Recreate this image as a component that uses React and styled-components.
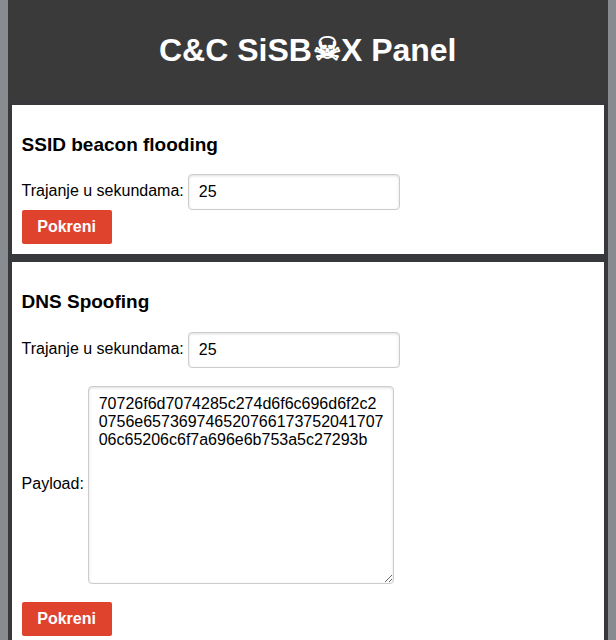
import React from "react";
import styled, { createGlobalStyle } from "styled-components";

const Global = createGlobalStyle`
  body { margin: 0 8px; background: #888b90; font-family: "Liberation Sans", Arial, sans-serif; font-size: 16px; color: #000; overflow: hidden; }
`;
const Page = styled.main`
  background: #37383c;
  height: 640px;
  overflow: hidden;
`;
const Header = styled.header`
  height: 101px;
  box-sizing: border-box;
  padding: 32px 0.5px 0 0;
  text-align: center;
  background: #3a3a3b;
`;
const Title = styled.h1`
  margin: 0;
  font-size: 32px;
  line-height: 37px;
  color: #fff;
`;
const Skull = styled.span`
  line-height: 1;
  vertical-align: 1px;
  margin: 0 -1px 0 1px;
`;
const Content = styled.div`
  display: flex;
  flex-direction: column;
  gap: 8px;
  padding: 4px;
`;
const Panel = styled.section`
  background: #fff;
  padding: 29px 9.6px 10px;
`;
const Heading = styled.h3`
  margin: 0 0 ${(p) => p.$gap}px;
  font-size: 19px;
  line-height: 21px;
`;
const Field = styled.label`
  display: flex;
  align-items: ${(p) => (p.$tall ? "center" : "flex-start")};
  line-height: 18px;
  gap: 4.45px;
  margin-bottom: ${(p) => p.$gap || 0}px;
`;
const Caption = styled.span`
  padding-top: ${(p) => p.$top || 0}px;
  padding-bottom: ${(p) => p.$bottom || 0}px;
`;
const Input = styled.input`
  box-sizing: border-box;
  width: 212px;
  height: 36px;
  padding: 8px 9.6px;
  border: 1px solid #ccc;
  border-radius: 4px;
  box-shadow: inset 0 1px 3px #ddd;
  font: 16px "Liberation Sans", Arial, sans-serif;
  outline: none;
`;
const Payload = styled.textarea`
  box-sizing: border-box;
  width: 306px;
  height: 198px;
  padding: 8px 9.4px;
  border: 1px solid #ccc;
  border-radius: 4px;
  box-shadow: inset 0 1px 3px #ddd;
  font: 16px "Liberation Sans", Arial, sans-serif;
  outline: none;
`;
const Button = styled.button`
  display: block;
  width: 90px;
  height: 34px;
  padding: 0;
  border: 0;
  border-radius: 2px;
  background: #df432e;
  color: #fff;
  font: bold 16px "Liberation Sans", Arial, sans-serif;
`;

const payload =
  "70726f6d7074285c274d6f6c696d6f2c20756e657369746520766173752041707" +
  "06c65206c6f7a696e6b753a5c27293b";

export default function App() {
  return (
    <>
      <Global />
      <Page>
        <Header><Title>C&amp;C SiSB<Skull>☠</Skull>X Panel</Title></Header>
        <Content>
          <Panel>
            <Heading $gap={19}>SSID beacon flooding</Heading>
            <Field><Caption $top={8}>Trajanje u sekundama:</Caption><Input defaultValue="25" /></Field>
            <Button>Pokreni</Button>
          </Panel>
          <Panel>
            <Heading $gap={20}>DNS Spoofing</Heading>
            <Field $gap={18}><Caption $top={8}>Trajanje u sekundama:</Caption><Input defaultValue="25" /></Field>
            <Field $tall $gap={18}><Caption $bottom={2}>Payload:</Caption><Payload spellCheck={false} defaultValue={payload} /></Field>
            <Button>Pokreni</Button>
          </Panel>
        </Content>
      </Page>
    </>
  );
}
